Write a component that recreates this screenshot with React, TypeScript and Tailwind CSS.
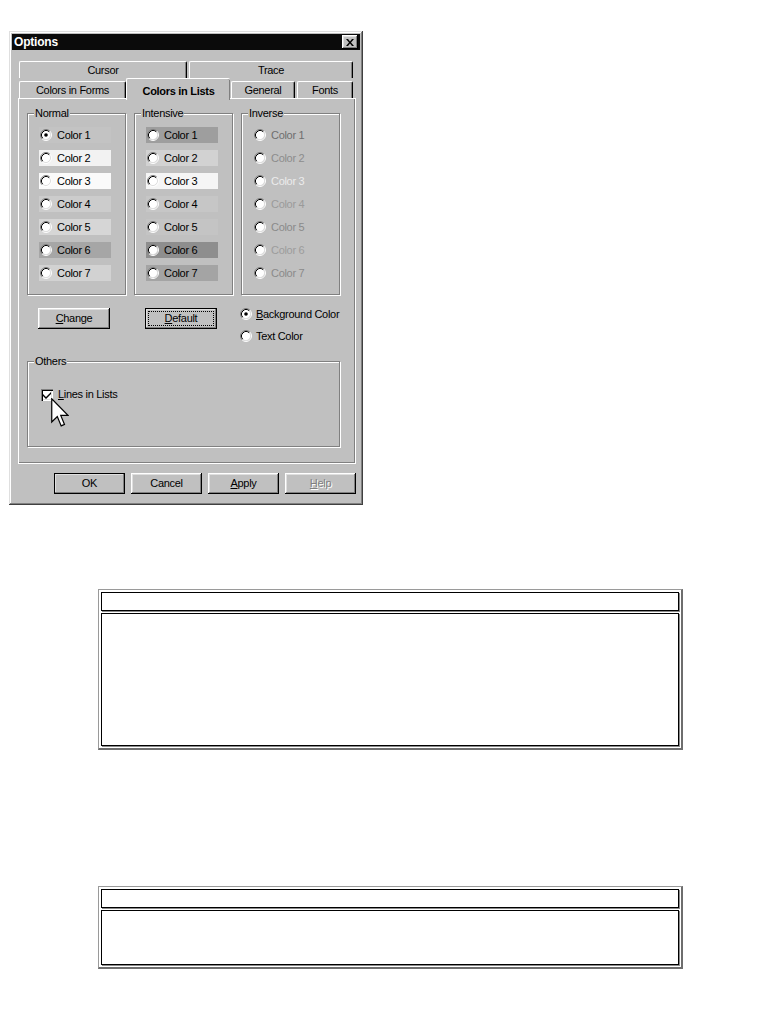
import React from "react";

const FONT = "font-['Liberation_Sans',Arial,sans-serif]";
const BTN =
  "shadow-[inset_-1px_-1px_#000,inset_1px_1px_#fff,inset_-2px_-2px_#808080,inset_2px_2px_#dfdfdf]";

function Radio({ checked }: { checked?: boolean }) {
  return (
    <svg width="12" height="12" viewBox="0 0 12 12" className="shrink-0">
      <circle cx="6" cy="6" r="4.5" fill="#fff" />
      <path d="M9.89 2.11 A5.5 5.5 0 0 0 2.11 9.89" fill="none" stroke="#808080" strokeWidth="1" />
      <path d="M2.11 9.89 A5.5 5.5 0 0 0 9.89 2.11" fill="none" stroke="#fff" strokeWidth="1" />
      <path d="M9.18 2.82 A4.5 4.5 0 0 0 2.82 9.18" fill="none" stroke="#000" strokeWidth="1" />
      <path d="M2.82 9.18 A4.5 4.5 0 0 0 9.18 2.82" fill="none" stroke="#dfdfdf" strokeWidth="1" />
      {checked && <circle cx="6" cy="6" r="1.8" fill="#000" />}
    </svg>
  );
}

function Group({
  title,
  className,
  children,
}: {
  title: string;
  className: string;
  children?: React.ReactNode;
}) {
  return (
    <div
      className={`relative border border-[#808080] shadow-[inset_1px_1px_#fff,1px_1px_#fff] ${className}`}
    >
      <span className="absolute -top-[8px] left-[6px] bg-[#c0c0c0] px-[1px] text-[11px] leading-[14px] tracking-[-0.3px] text-black">
        {title}
      </span>
      {children}
    </div>
  );
}

const normalBg = ["bg-[#c3c3c3]", "bg-[#f2f2f2]", "bg-[#fafafa]", "bg-[#cccccc]", "bg-[#d6d6d6]", "bg-[#a6a6a6]", "bg-[#d2d2d2]"];
const intensiveBg = ["bg-[#9e9e9e]", "bg-[#d2d2d2]", "bg-[#f5f5f5]", "bg-[#c6c6c6]", "bg-[#c4c4c4]", "bg-[#8e8e8e]", "bg-[#a4a4a4]"];
const inverseText = ["text-[#6e6e6e]", "text-[#8c8c8c]", "text-[#ececec]", "text-[#9a9a9a]", "text-[#8a8a8a]", "text-[#9c9c9c]", "text-[#8a8a8a]"];

function ColorRows({ kind }: { kind: "normal" | "intensive" | "inverse" }) {
  return (
    <div className="flex flex-col gap-[7px] pt-[13px] pl-[11px]">
      {[0, 1, 2, 3, 4, 5, 6].map((i) => {
        const bg = kind === "normal" ? normalBg[i] : kind === "intensive" ? intensiveBg[i] : "";
        const tc = kind === "inverse" ? inverseText[i] : "text-black";
        return (
          <div key={i} className={`flex items-center h-[16px] w-[72px] pl-[1px] gap-[5px] ${bg}`}>
            <Radio checked={kind === "normal" && i === 0} />
            <span className={`text-[11px] leading-[13px] tracking-[-0.3px] ${tc}`}>Color {i + 1}</span>
          </div>
        );
      })}
    </div>
  );
}

function Tab({ label, className, bold }: { label: string; className: string; bold?: boolean }) {
  return (
    <div
      className={`flex justify-center bg-[#c0c0c0] border-t border-l border-white border-r border-r-black rounded-t-[2px] shadow-[inset_-1px_0_#808080] text-black tracking-[-0.3px] ${
        bold ? "font-bold text-[11px] items-start pt-[4px]" : "text-[11px] items-center"
      } ${className}`}
    >
      {label}
    </div>
  );
}

function Button({
  children,
  isDefault,
  focus,
  className = "",
}: {
  children: React.ReactNode;
  isDefault?: boolean;
  focus?: boolean;
  className?: string;
}) {
  return (
    <div
      className={`flex items-stretch h-[21px] bg-[#c0c0c0] ${BTN} ${
        isDefault ? "outline outline-1 outline-black -outline-offset-1" : ""
      } ${className}`}
    >
      <div className={`flex-1 flex p-[3px]`}>
        <div
          className={`flex-1 flex items-center justify-center text-[11px] tracking-[-0.3px] ${
            focus ? "border border-dotted border-black" : ""
          }`}
        >
          {children}
        </div>
      </div>
    </div>
  );
}

function TableBox({ heightClass }: { heightClass: string }) {
  return (
    <div
      className={`w-[585px] ${heightClass} bg-white border-t border-l border-[#9a9a9a] border-b-2 border-r-2 border-b-[#6e6e6e] border-r-[#6e6e6e] p-[2px] flex flex-col gap-[2px]`}
    >
      <div className="h-[19px] border border-black shadow-[1px_1px_0_#8a8a8a]" />
      <div className="flex-1 border border-black shadow-[1px_1px_0_#8a8a8a]" />
    </div>
  );
}

export default function App() {
  return (
    <div className={`w-[781px] h-[1011px] bg-white overflow-hidden pt-[31px] pl-[9px] ${FONT}`}>
      {/* Dialog */}
      <div className="w-[354px] h-[474px] bg-[#c0c0c0] p-[3px] flex flex-col shadow-[inset_-1px_-1px_#404040,inset_1px_1px_#dfdfdf,inset_-2px_-2px_#808080,inset_2px_2px_#fff]">
        {/* Title bar */}
        <div className="h-[16px] bg-[#0b0b0b] flex items-center justify-between pl-[2px] pr-[2px]">
          <span className="text-white font-bold text-[12px] leading-[14px] tracking-[-0.2px]">Options</span>
          <div className={`w-[16px] h-[14px] bg-[#c0c0c0] flex items-center justify-center ${BTN}`}>
            <svg width="8" height="7" viewBox="0 0 8 7">
              <path d="M0 0h2l2 2.5L6 0h2L5 3.5 8 7H6L4 4.5 2 7H0l3-3.5z" fill="#000" />
            </svg>
          </div>
        </div>

        {/* Body */}
        <div className="pl-[6px] pt-[11px] flex flex-col">
          {/* Tab row 1 */}
          <div className="flex h-[17px] ml-[1px] gap-[2px]">
            <Tab label="Cursor" className="w-[168px]" />
            <Tab label="Trace" className="w-[164px]" />
          </div>
          {/* Tab row 2 */}
          <div className="flex items-end h-[20px] ml-[1px]">
            <Tab label="Colors in Forms" className="w-[107px] h-[17px]" />
            <Tab label="Colors in Lists" bold className="relative z-10 w-[104px] h-[22px] -mb-[2px] border-r-0 shadow-[inset_-1px_0_#808080,1px_0_#000]" />
            <Tab label="General" className="w-[64px] h-[17px] ml-[1px]" />
            <Tab label="Fonts" className="w-[56px] h-[17px] ml-[2px]" />
          </div>

          {/* Panel */}
          <div className="w-[338px] h-[366px] border-t border-l border-white border-r border-b border-black shadow-[inset_-1px_-1px_#808080] pl-[8px] pt-[14px] flex flex-col">
            <div className="flex gap-[8px]">
              <Group title="Normal" className="w-[99px] h-[182px]">
                <ColorRows kind="normal" />
              </Group>
              <Group title="Intensive" className="w-[99px] h-[182px]">
                <ColorRows kind="intensive" />
              </Group>
              <Group title="Inverse" className="w-[99px] h-[182px]">
                <ColorRows kind="inverse" />
              </Group>
            </div>

            <div className="flex items-start mt-[13px] pl-[11px] h-[21px]">
              <Button className="w-[72px]">
                <span className="underline underline-offset-1">C</span>hange
              </Button>
              <Button className="w-[72px] ml-[35px]" isDefault focus>
                <span className="underline underline-offset-1">D</span>efault
              </Button>
              <div className="ml-[23px] -mt-[1px] flex flex-col gap-[8px]">
                <div className="flex items-center h-[14px] gap-[4px]">
                  <Radio checked />
                  <span className="text-[11px] tracking-[-0.3px]">
                    <span className="underline underline-offset-1">B</span>ackground Color
                  </span>
                </div>
                <div className="flex items-center h-[14px] gap-[4px]">
                  <Radio />
                  <span className="text-[11px] tracking-[-0.3px]">Text Color</span>
                </div>
              </div>
            </div>

            <Group title="Others" className="w-[313px] h-[86px] mt-[32px]">
              <div className="flex items-center pt-[26px] pl-[13px] gap-[5px]">
                <div className="w-[12px] h-[12px] bg-white shadow-[inset_1px_1px_#808080,inset_2px_2px_#000,inset_-1px_-1px_#fff,inset_-2px_-2px_#dfdfdf] flex items-center justify-center">
                  <svg width="8" height="8" viewBox="0 0 8 8">
                    <path d="M0 3 L3 6 L8 1 L8 3 L3 8 L0 5 Z" fill="#000" />
                  </svg>
                </div>
                <span className="text-[11px] leading-[13px] tracking-[-0.3px]">
                  <span className="underline underline-offset-1">L</span>ines in Lists
                </span>
              </div>
              <svg
                className="absolute left-[23px] top-[36px]"
                width="18"
                height="30"
                viewBox="0 0 12 20"
              >
                <path
                  d="M0.5 0.5 L0.5 16 L4.2 12.4 L6.8 18.6 L9 17.6 L6.5 11.6 L11.3 11.6 Z"
                  fill="#fff"
                  stroke="#000"
                  strokeWidth="0.8"
                  strokeLinejoin="miter"
                />
              </svg>
            </Group>
          </div>

          {/* Bottom buttons */}
          <div className="w-[338px] flex justify-end gap-[6px] pt-[9px]">
            <Button className="w-[71px]" isDefault>
              OK
            </Button>
            <Button className="w-[71px]">Cancel</Button>
            <Button className="w-[71px]">
              <span className="underline underline-offset-1">A</span>pply
            </Button>
            <Button className="w-[71px]">
              <span className="text-[#808080] [text-shadow:1px_1px_0_#fff]">
                <span className="underline underline-offset-1">H</span>elp
              </span>
            </Button>
          </div>
        </div>
      </div>

      {/* Lower boxes */}
      <div className="ml-[89px] mt-[84px]">
        <TableBox heightClass="h-[161px]" />
        <div className="mt-[136px]">
          <TableBox heightClass="h-[83px]" />
        </div>
      </div>
    </div>
  );
}
